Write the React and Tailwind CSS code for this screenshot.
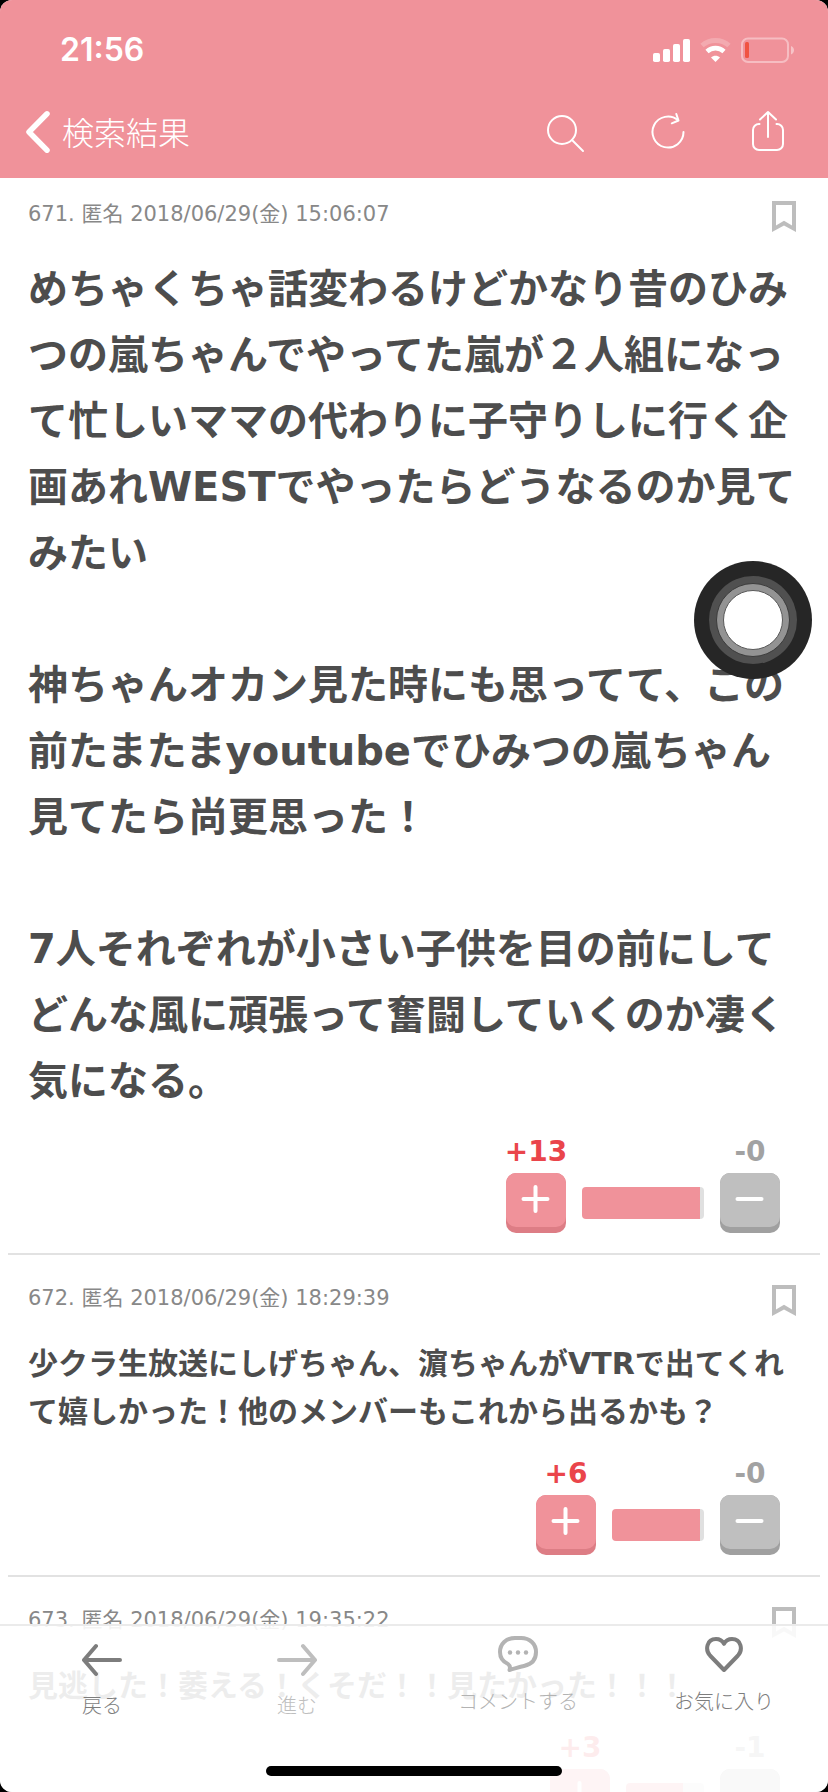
import React from "react";

const posts = [
  {
    number: 671,
    date: "2018/06/29(金) 15:06:07",
    large: true,
    paragraphs: [
      "めちゃくちゃ話変わるけどかなり昔のひみつの嵐ちゃんでやってた嵐が２人組になって忙しいママの代わりに子守りしに行く企画あれWESTでやったらどうなるのか見てみたい",
      "神ちゃんオカン見た時にも思ってて、この前たまたまyoutubeでひみつの嵐ちゃん見てたら尚更思った！",
      "7人それぞれが小さい子供を目の前にしてどんな風に頑張って奮闘していくのか凄く気になる。",
    ],
    plus: 13,
    minus: 0,
    plusWidth: 118,
    minusWidth: 4,
  },
  {
    number: 672,
    date: "2018/06/29(金) 18:29:39",
    paragraphs: ["少クラ生放送にしげちゃん、濵ちゃんがVTRで出てくれて嬉しかった！他のメンバーもこれから出るかも？"],
    plus: 6,
    minus: 0,
    plusWidth: 88,
    minusWidth: 4,
  },
  {
    number: 673,
    date: "2018/06/29(金) 19:35:22",
    paragraphs: ["見逃した！萎える！くそだ！！見たかった！！！"],
    plus: 3,
    minus: 1,
    plusWidth: 57,
    minusWidth: 21,
  },
];

function StatusIcons() {
  return (
    <div className="flex items-center">
      <svg className="mr-[9px]" width="37" height="26" viewBox="0 0 37 26" fill="#fff" aria-hidden="true">
        <rect x="0" y="16" width="7" height="9" rx="1.8" />
        <rect x="10" y="12" width="7" height="13" rx="1.8" />
        <rect x="20" y="7" width="7" height="18" rx="1.8" />
        <rect x="30" y="2" width="7" height="23" rx="1.8" />
      </svg>
      <svg className="mr-[9px]" width="33" height="26" viewBox="0 0 33 26" fill="none" aria-hidden="true">
        <path d="M3 8.5C10.5 1.8 22.5 1.8 30 8.5" stroke="#fff" strokeOpacity=".22" strokeWidth="5" />
        <path d="M8 14.5C12.8 10 20.2 10 25 14.5" stroke="#fff" strokeWidth="4.6" />
        <path d="M16.500 25L12 20.500C14.500 18 18.500 18 21 20.500Z" fill="#fff" />
      </svg>
      <svg width="53" height="26" viewBox="0 0 53 26" fill="none" aria-hidden="true">
        <rect x="1" y="1.500" width="46" height="23.500" rx="6" stroke="#fff" strokeOpacity=".4" strokeWidth="2" />
        <path d="M50 9C54 10.500 54 16 50 17.500Z" fill="#fff" fillOpacity=".45" />
        <rect x="4" y="5" width="4" height="16" rx="1.500" fill="#f05342" />
      </svg>
    </div>
  );
}

function Header() {
  return (
    <header className="shrink-0 bg-[#f0929a] text-white">
      <div className="flex h-[86px] items-center justify-between pl-[60px] pr-[34px] pt-[14px]">
        <span className="font-['Inter',sans-serif] text-[32px] font-semibold leading-8">21:56</span>
        <StatusIcons />
      </div>
      <nav className="flex h-[92px] items-center justify-between pl-6 pr-[43px]">
        <button type="button" className="flex items-center gap-[10px]">
          <svg width="28" height="44" viewBox="0 0 28 44" fill="none" stroke="#fff" strokeWidth="5.500" strokeLinecap="round" strokeLinejoin="round" aria-hidden="true">
            <path d="M23 3.800L5 22L23 40.200" />
          </svg>
          <span className="pt-1 text-[32px] font-light leading-10">検索結果</span>
        </button>
        <div className="flex items-center gap-[66px]">
          <button type="button" aria-label="検索">
            <svg width="38" height="44" viewBox="0 0 38 44" fill="none" stroke="#fff" strokeWidth="2" strokeLinecap="round" aria-hidden="true">
              <circle cx="15" cy="20" r="14" />
              <path d="M25 30L36 41" />
            </svg>
          </button>
          <button type="button" aria-label="更新">
            <svg width="34" height="44" viewBox="0 0 34 44" fill="none" stroke="#fff" strokeWidth="2" strokeLinecap="round" strokeLinejoin="round" aria-hidden="true">
              <path d="M32.500 22A15.500 15.500 0 1 1 27 10.200" />
              <path d="M25.300 4L27.500 10.500L20.800 13.300" />
            </svg>
          </button>
          <button type="button" aria-label="共有">
            <svg width="34" height="44" viewBox="0 0 34 44" fill="none" stroke="#fff" strokeWidth="2" strokeLinecap="round" strokeLinejoin="round" aria-hidden="true">
              <path d="M8.500 14H8A6 6 0 0 0 2 20V34A6 6 0 0 0 8 40H26A6 6 0 0 0 32 34V20A6 6 0 0 0 26 14H25.500" />
              <path d="M17 27V2M9 9.500L17 2L25 9.500" />
            </svg>
          </button>
        </div>
      </nav>
    </header>
  );
}

function VoteButton({ positive, count }) {
  return (
    <div className="flex w-[60px] flex-col items-center">
      <span className={positive ? "mb-[5px] whitespace-nowrap text-[28px] font-bold leading-8 text-[#ea454b]" : "mb-[5px] whitespace-nowrap text-[28px] font-bold leading-8 text-[#a2a2a2]"}>
        {positive ? "+" : "-"}
        {count}
      </span>
      <button
        type="button"
        aria-label={positive ? "プラス" : "マイナス"}
        className={positive ? "h-[60px] w-[60px] rounded-[10px] bg-[#dd7d85]" : "h-[60px] w-[60px] rounded-[10px] bg-[#a0a0a0]"}
      >
        <span className={positive ? "mb-[6px] flex h-[54px] items-center justify-center rounded-[10px] bg-[#f0929a]" : "mb-[6px] flex h-[54px] items-center justify-center rounded-[10px] bg-[#bfbfbf]"}>
          <svg width="30" height="30" viewBox="0 0 30 30" stroke="#fff" strokeWidth="4" strokeLinecap="round" aria-hidden="true">
            <path d={positive ? "M2.500 14H26.500M14.500 2V26" : "M2.500 14H26.500"} />
          </svg>
        </span>
      </button>
    </div>
  );
}

function Post({ post, first }) {
  return (
    <article className={first ? "mx-2 border-b-2 border-[#e2e2e2] pb-5 pt-[23px]" : "mx-2 border-b-2 border-[#e2e2e2] pb-5 pt-[30px]"}>
      <div className="flex items-start justify-between pl-5 pr-6">
        <p className="text-[21px] leading-[26px] text-[#888]">
          {post.number}. 匿名 {post.date}
        </p>
        <button type="button" aria-label="ブックマーク">
          <svg className="block" width="24" height="31" viewBox="0 0 24 31" fill="#bdbdbd" fillRule="evenodd" aria-hidden="true">
            <path d="M0 0H24V31L12 24.500L0 31ZM4 4V24.500L12 19.800L20 24.500V4Z" />
          </svg>
        </button>
      </div>
      <div
        className={
          post.large
            ? "mt-6 flex flex-col gap-[66px] px-5 text-[40px] font-semibold leading-[66px] text-[#4d4d4d]"
            : "mt-6 flex flex-col px-5 text-[30px] font-semibold leading-[48px] text-[#4d4d4d]"
        }
      >
        {post.paragraphs.map((text) => (
          <p key={text}>{text}</p>
        ))}
      </div>
      <div className="mt-[22px] flex items-end justify-end gap-4 pr-10">
        <VoteButton positive count={post.plus} />
        <div className="mb-[14px] flex h-8 overflow-hidden rounded-[4px]">
          <span className="bg-[#f0929a]" style={{ width: post.plusWidth }} />
          <span className="bg-[#e0e0e0]" style={{ width: post.minusWidth }} />
        </div>
        <VoteButton count={post.minus} />
      </div>
    </article>
  );
}

function Toolbar() {
  return (
    <footer className="absolute inset-x-0 bottom-0 flex h-[168px] flex-col justify-between border-t-2 border-[#ebebeb] bg-white/90 pb-4 text-[20px] font-light leading-6">
      <nav className="grid grid-cols-[204fr_186fr_256fr_156fr] items-start pr-[26px] pt-[10px] text-[#7d7d7d]">
        <button type="button" className="flex flex-col items-center gap-4 pt-[6px]">
          <svg width="40" height="36" viewBox="0 0 40 36" fill="none" stroke="currentColor" strokeWidth="4" strokeLinecap="round" strokeLinejoin="round" aria-hidden="true">
            <path d="M38 18H2M14 4L2 18L14 32" />
          </svg>
          戻る
        </button>
        <button type="button" disabled className="flex flex-col items-center gap-4 pt-[6px] text-[#bebebe]">
          <svg width="40" height="36" viewBox="0 0 40 36" fill="none" stroke="currentColor" strokeWidth="4" strokeLinecap="round" strokeLinejoin="round" aria-hidden="true">
            <path d="M2 18H38M26 4L38 18L26 32" />
          </svg>
          進む
        </button>
        <button type="button" className="flex flex-col items-center gap-[18px] text-[#b3b3b3]">
          <svg width="40" height="36" viewBox="0 0 40 36" fill="none" aria-hidden="true">
            <path d="M17 2H23C32 2 38 8 38 16C38 24 33 28.500 26 30C21 31 16.500 32.800 11.500 34C12.500 31.500 12 29.500 10 28C5 25.800 2 21.500 2 16C2 8 8 2 17 2Z" stroke="currentColor" strokeWidth="4" strokeLinejoin="round" />
            <circle cx="12" cy="16.500" r="2.200" fill="currentColor" />
            <circle cx="20" cy="16.500" r="2.200" fill="currentColor" />
            <circle cx="28" cy="16.500" r="2.200" fill="currentColor" />
          </svg>
          コメントする
        </button>
        <button type="button" className="flex flex-col items-center gap-[18px]">
          <svg width="38" height="36" viewBox="0 0 38 36" fill="none" stroke="currentColor" strokeWidth="4" strokeLinejoin="round" aria-hidden="true">
            <path d="M19 34L5 19.500C0 14 1.500 3 11 3C15 3 17.500 5 19 7.800C20.500 5 23 3 27 3C36.500 3 38 14 33 19.500Z" />
          </svg>
          お気に入り
        </button>
      </nav>
      <div className="h-[10px] w-[296px] self-center rounded-full bg-black" />
    </footer>
  );
}

export default function App() {
  return (
    <div className="h-screen bg-black font-['DejaVu_Sans','Noto_Sans_CJK_JP',sans-serif]" lang="ja">
      <div className="relative flex h-full flex-col overflow-hidden rounded-[12px] bg-white">
        <Header />
        <main className="min-h-0 flex-1 overflow-y-auto [scrollbar-width:none]">
          {posts.map((post, index) => (
            <Post key={post.number} post={post} first={index === 0} />
          ))}
        </main>
        <Toolbar />
        <button
          type="button"
          aria-label="AssistiveTouch"
          className="absolute right-4 top-[561px] flex h-[118px] w-[118px] items-center justify-center rounded-full bg-[#262626]"
        >
          <span className="flex h-[88px] w-[88px] items-center justify-center rounded-full bg-[#505050]">
            <span className="flex h-[74px] w-[74px] items-center justify-center rounded-full border border-[#3c3c3c] bg-[#939393]">
              <span className="h-[60px] w-[60px] rounded-full border border-[#5a5a5a] bg-white" />
            </span>
          </span>
        </button>
      </div>
    </div>
  );
}
